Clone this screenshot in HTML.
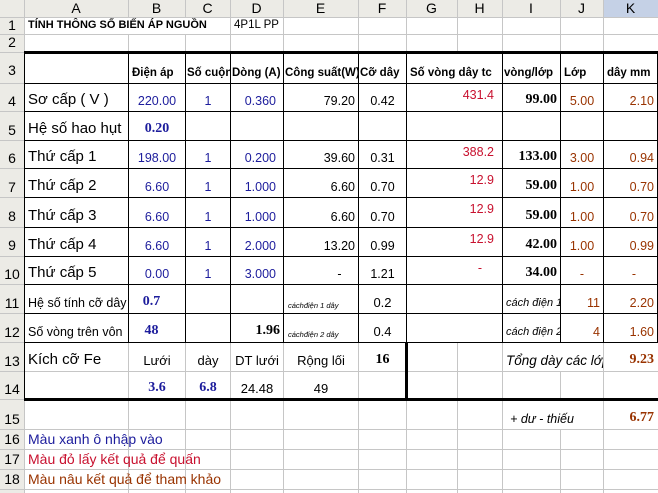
<!DOCTYPE html>
<html><head><meta charset="utf-8"><style>
body{margin:0;width:658px;height:493px;overflow:hidden;background:#fff;position:relative;font-family:"Liberation Sans",Arial,sans-serif}
div{position:absolute;box-sizing:border-box}
.g{background:#c6c6c6}
.k{background:#000}
.h{background:#ecebe6;color:#000;font-size:14px;text-align:center;line-height:17px}
.c{white-space:nowrap;overflow:hidden;line-height:1;display:flex;align-items:flex-end;padding:0 3px 4px 3px;font-size:12.5px;color:#000}
.r{justify-content:flex-end}.m{justify-content:center}
.t{align-items:flex-start;padding-top:6px}
.b{font-family:"Liberation Serif",serif;font-weight:bold;font-size:14px}
.bl{color:#1c1c9c}.rd{color:#c8102e}.br{color:#993300}
.L{font-size:15px}
.hd{font-weight:bold;font-size:11.5px}
.i{font-style:italic}
</style></head><body>
<div class="h" style="left:0;top:0;width:658px;height:17px;"></div>
<div class="h" style="left:0;top:0;width:24px;height:493px;"></div>
<div style="left:603px;top:0;width:55px;height:17px;background:#c5d1e6"></div>
<div class="g" style="left:24px;top:0;width:1px;height:493px"></div>
<div class="g" style="left:128px;top:0;width:1px;height:493px"></div>
<div class="g" style="left:185px;top:0;width:1px;height:493px"></div>
<div class="g" style="left:230px;top:0;width:1px;height:493px"></div>
<div class="g" style="left:283px;top:0;width:1px;height:493px"></div>
<div class="g" style="left:358px;top:0;width:1px;height:493px"></div>
<div class="g" style="left:406px;top:0;width:1px;height:493px"></div>
<div class="g" style="left:457px;top:0;width:1px;height:493px"></div>
<div class="g" style="left:502px;top:0;width:1px;height:493px"></div>
<div class="g" style="left:560px;top:0;width:1px;height:493px"></div>
<div class="g" style="left:603px;top:0;width:1px;height:493px"></div>
<div class="g" style="left:0;top:17px;width:658px;height:1px"></div>
<div class="g" style="left:0;top:34px;width:658px;height:1px"></div>
<div class="g" style="left:0;top:52px;width:658px;height:1px"></div>
<div class="g" style="left:0;top:83px;width:658px;height:1px"></div>
<div class="g" style="left:0;top:111px;width:658px;height:1px"></div>
<div class="g" style="left:0;top:140px;width:658px;height:1px"></div>
<div class="g" style="left:0;top:168px;width:658px;height:1px"></div>
<div class="g" style="left:0;top:197px;width:658px;height:1px"></div>
<div class="g" style="left:0;top:227px;width:658px;height:1px"></div>
<div class="g" style="left:0;top:256px;width:658px;height:1px"></div>
<div class="g" style="left:0;top:284px;width:658px;height:1px"></div>
<div class="g" style="left:0;top:313px;width:658px;height:1px"></div>
<div class="g" style="left:0;top:342px;width:658px;height:1px"></div>
<div class="g" style="left:0;top:371px;width:658px;height:1px"></div>
<div class="g" style="left:0;top:399px;width:658px;height:1px"></div>
<div class="g" style="left:0;top:429px;width:658px;height:1px"></div>
<div class="g" style="left:0;top:449px;width:658px;height:1px"></div>
<div class="g" style="left:0;top:469px;width:658px;height:1px"></div>
<div class="g" style="left:0;top:489px;width:658px;height:1px"></div>
<div style="left:25px;top:18px;width:205px;height:16px;background:#fff"></div>
<div style="left:503px;top:343px;width:100px;height:28px;background:#fff"></div>
<div style="left:503px;top:400px;width:100px;height:29px;background:#fff"></div>
<div class="h" style="left:24px;top:0;width:104px;height:17px;background:none">A</div>
<div class="h" style="left:128px;top:0;width:57px;height:17px;background:none">B</div>
<div class="h" style="left:185px;top:0;width:45px;height:17px;background:none">C</div>
<div class="h" style="left:230px;top:0;width:53px;height:17px;background:none">D</div>
<div class="h" style="left:283px;top:0;width:75px;height:17px;background:none">E</div>
<div class="h" style="left:358px;top:0;width:48px;height:17px;background:none">F</div>
<div class="h" style="left:406px;top:0;width:51px;height:17px;background:none">G</div>
<div class="h" style="left:457px;top:0;width:45px;height:17px;background:none">H</div>
<div class="h" style="left:502px;top:0;width:58px;height:17px;background:none">I</div>
<div class="h" style="left:560px;top:0;width:43px;height:17px;background:none">J</div>
<div class="h" style="left:603px;top:0;width:55px;height:17px;background:none">K</div>
<div class="h" style="left:0;top:17px;width:24px;height:17px;background:none">1</div>
<div class="h" style="left:0;top:34px;width:24px;height:18px;background:none">2</div>
<div class="h" style="left:0;top:62px;width:24px;height:17px;background:none">3</div>
<div class="h" style="left:0;top:93px;width:24px;height:17px;background:none">4</div>
<div class="h" style="left:0;top:122px;width:24px;height:17px;background:none">5</div>
<div class="h" style="left:0;top:150px;width:24px;height:17px;background:none">6</div>
<div class="h" style="left:0;top:179px;width:24px;height:17px;background:none">7</div>
<div class="h" style="left:0;top:208px;width:24px;height:17px;background:none">8</div>
<div class="h" style="left:0;top:237px;width:24px;height:17px;background:none">9</div>
<div class="h" style="left:0;top:266px;width:24px;height:17px;background:none">10</div>
<div class="h" style="left:0;top:295px;width:24px;height:17px;background:none">11</div>
<div class="h" style="left:0;top:324px;width:24px;height:17px;background:none">12</div>
<div class="h" style="left:0;top:353px;width:24px;height:17px;background:none">13</div>
<div class="h" style="left:0;top:381px;width:24px;height:17px;background:none">14</div>
<div class="h" style="left:0;top:411px;width:24px;height:17px;background:none">15</div>
<div class="h" style="left:0;top:431px;width:24px;height:17px;background:none">16</div>
<div class="h" style="left:0;top:451px;width:24px;height:17px;background:none">17</div>
<div class="h" style="left:0;top:471px;width:24px;height:17px;background:none">18</div>
<div class="k" style="left:24px;top:51px;width:634px;height:3px"></div>
<div class="k" style="left:24px;top:83px;width:634px;height:1px"></div>
<div class="k" style="left:24px;top:111px;width:634px;height:1px"></div>
<div class="k" style="left:24px;top:140px;width:634px;height:1px"></div>
<div class="k" style="left:24px;top:168px;width:634px;height:1px"></div>
<div class="k" style="left:24px;top:197px;width:634px;height:1px"></div>
<div class="k" style="left:24px;top:227px;width:634px;height:1px"></div>
<div class="k" style="left:24px;top:256px;width:634px;height:1px"></div>
<div class="k" style="left:24px;top:284px;width:634px;height:1px"></div>
<div class="k" style="left:24px;top:313px;width:634px;height:1px"></div>
<div class="k" style="left:24px;top:342px;width:634px;height:1px"></div>
<div class="k" style="left:24px;top:398px;width:634px;height:3px"></div>
<div class="k" style="left:24px;top:52px;width:1px;height:348px"></div>
<div class="k" style="left:128px;top:52px;width:1px;height:290px"></div>
<div class="k" style="left:185px;top:52px;width:1px;height:290px"></div>
<div class="k" style="left:230px;top:52px;width:1px;height:290px"></div>
<div class="k" style="left:283px;top:52px;width:1px;height:290px"></div>
<div class="k" style="left:358px;top:52px;width:1px;height:290px"></div>
<div class="k" style="left:406px;top:52px;width:1px;height:290px"></div>
<div class="k" style="left:405px;top:342px;width:3px;height:58px"></div>
<div class="k" style="left:502px;top:52px;width:1px;height:290px"></div>
<div class="k" style="left:560px;top:52px;width:1px;height:290px"></div>
<div class="k" style="left:603px;top:52px;width:1px;height:290px"></div>
<div class="k" style="left:657px;top:52px;width:1px;height:290px"></div>
<div style="left:407px;top:54px;width:95px;height:29px;background:#fff"></div>
<div style="left:407px;top:84px;width:95px;height:27px;background:#fff"></div>
<div style="left:407px;top:112px;width:95px;height:28px;background:#fff"></div>
<div style="left:407px;top:141px;width:95px;height:27px;background:#fff"></div>
<div style="left:407px;top:169px;width:95px;height:28px;background:#fff"></div>
<div style="left:407px;top:198px;width:95px;height:29px;background:#fff"></div>
<div style="left:407px;top:228px;width:95px;height:28px;background:#fff"></div>
<div style="left:407px;top:257px;width:95px;height:27px;background:#fff"></div>
<div style="left:407px;top:285px;width:95px;height:28px;background:#fff"></div>
<div style="left:407px;top:314px;width:95px;height:28px;background:#fff"></div>
<div class="c hd" style="left:25px;top:17px;width:220px;height:17px;padding-bottom:3px;font-size:11px">TÍNH THÔNG SỐ BIẾN ÁP NGUỒN</div>
<div class="c" style="left:231px;top:17px;width:60px;height:17px;padding-bottom:3px;font-size:11.5px">4P1L PP</div>
<div class="c hd" style="left:129px;top:52px;width:56px;height:31px">Điện áp</div>
<div class="c hd" style="left:186px;top:52px;width:44px;height:31px;padding:0 0 4px 1px">Số cuộn</div>
<div class="c hd" style="left:231px;top:52px;width:52px;height:31px;padding-left:1px">Dòng (A)</div>
<div class="c hd" style="left:284px;top:52px;width:74px;height:31px;padding-left:1px">Công suất(W)</div>
<div class="c hd" style="left:359px;top:52px;width:47px;height:31px;padding-left:1px">Cỡ dây</div>
<div class="c hd" style="left:407px;top:52px;width:95px;height:31px">Số vòng dây tc</div>
<div class="c hd" style="left:503px;top:52px;width:57px;height:31px;padding-left:1px">vòng/lớp</div>
<div class="c hd" style="left:561px;top:52px;width:42px;height:31px">Lớp</div>
<div class="c hd" style="left:604px;top:52px;width:53px;height:31px">dây mm</div>
<div class="c L" style="left:25px;top:83px;width:103px;height:28px">Sơ cấp ( V )</div>
<div class="c m bl" style="left:129px;top:83px;width:56px;height:28px">220.00</div>
<div class="c m bl" style="left:186px;top:83px;width:44px;height:28px">1</div>
<div class="c r bl" style="left:231px;top:83px;width:52px;height:28px;padding-right:7px">0.360</div>
<div class="c r" style="left:284px;top:83px;width:74px;height:28px">79.20</div>
<div class="c m" style="left:359px;top:83px;width:47px;height:28px">0.42</div>
<div class="c r t rd" style="left:407px;top:83px;width:95px;height:28px;padding-right:8px">431.4</div>
<div class="c r b" style="left:503px;top:83px;width:57px;height:28px">99.00</div>
<div class="c m br" style="left:561px;top:83px;width:42px;height:28px">5.00</div>
<div class="c r br" style="left:604px;top:83px;width:53px;height:28px">2.10</div>
<div class="c L" style="left:25px;top:111px;width:103px;height:29px">Hệ số hao hụt</div>
<div class="c m b bl" style="left:129px;top:111px;width:56px;height:29px">0.20</div>
<div class="c L" style="left:25px;top:140px;width:103px;height:28px">Thứ cấp 1</div>
<div class="c m bl" style="left:129px;top:140px;width:56px;height:28px">198.00</div>
<div class="c m bl" style="left:186px;top:140px;width:44px;height:28px">1</div>
<div class="c r bl" style="left:231px;top:140px;width:52px;height:28px;padding-right:7px">0.200</div>
<div class="c r" style="left:284px;top:140px;width:74px;height:28px">39.60</div>
<div class="c m" style="left:359px;top:140px;width:47px;height:28px">0.31</div>
<div class="c r t rd" style="left:407px;top:140px;width:95px;height:28px;padding-right:8px">388.2</div>
<div class="c r b" style="left:503px;top:140px;width:57px;height:28px">133.00</div>
<div class="c m br" style="left:561px;top:140px;width:42px;height:28px">3.00</div>
<div class="c r br" style="left:604px;top:140px;width:53px;height:28px">0.94</div>
<div class="c L" style="left:25px;top:168px;width:103px;height:29px">Thứ cấp 2</div>
<div class="c m bl" style="left:129px;top:168px;width:56px;height:29px">6.60</div>
<div class="c m bl" style="left:186px;top:168px;width:44px;height:29px">1</div>
<div class="c r bl" style="left:231px;top:168px;width:52px;height:29px;padding-right:7px">1.000</div>
<div class="c r" style="left:284px;top:168px;width:74px;height:29px">6.60</div>
<div class="c m" style="left:359px;top:168px;width:47px;height:29px">0.70</div>
<div class="c r t rd" style="left:407px;top:168px;width:95px;height:29px;padding-right:8px">12.9</div>
<div class="c r b" style="left:503px;top:168px;width:57px;height:29px">59.00</div>
<div class="c m br" style="left:561px;top:168px;width:42px;height:29px">1.00</div>
<div class="c r br" style="left:604px;top:168px;width:53px;height:29px">0.70</div>
<div class="c L" style="left:25px;top:197px;width:103px;height:30px">Thứ cấp 3</div>
<div class="c m bl" style="left:129px;top:197px;width:56px;height:30px">6.60</div>
<div class="c m bl" style="left:186px;top:197px;width:44px;height:30px">1</div>
<div class="c r bl" style="left:231px;top:197px;width:52px;height:30px;padding-right:7px">1.000</div>
<div class="c r" style="left:284px;top:197px;width:74px;height:30px">6.60</div>
<div class="c m" style="left:359px;top:197px;width:47px;height:30px">0.70</div>
<div class="c r t rd" style="left:407px;top:197px;width:95px;height:30px;padding-right:8px">12.9</div>
<div class="c r b" style="left:503px;top:197px;width:57px;height:30px">59.00</div>
<div class="c m br" style="left:561px;top:197px;width:42px;height:30px">1.00</div>
<div class="c r br" style="left:604px;top:197px;width:53px;height:30px">0.70</div>
<div class="c L" style="left:25px;top:227px;width:103px;height:29px">Thứ cấp 4</div>
<div class="c m bl" style="left:129px;top:227px;width:56px;height:29px">6.60</div>
<div class="c m bl" style="left:186px;top:227px;width:44px;height:29px">1</div>
<div class="c r bl" style="left:231px;top:227px;width:52px;height:29px;padding-right:7px">2.000</div>
<div class="c r" style="left:284px;top:227px;width:74px;height:29px">13.20</div>
<div class="c m" style="left:359px;top:227px;width:47px;height:29px">0.99</div>
<div class="c r t rd" style="left:407px;top:227px;width:95px;height:29px;padding-right:8px">12.9</div>
<div class="c r b" style="left:503px;top:227px;width:57px;height:29px">42.00</div>
<div class="c m br" style="left:561px;top:227px;width:42px;height:29px">1.00</div>
<div class="c r br" style="left:604px;top:227px;width:53px;height:29px">0.99</div>
<div class="c L" style="left:25px;top:256px;width:103px;height:28px">Thứ cấp 5</div>
<div class="c m bl" style="left:129px;top:256px;width:56px;height:28px">0.00</div>
<div class="c m bl" style="left:186px;top:256px;width:44px;height:28px">1</div>
<div class="c r bl" style="left:231px;top:256px;width:52px;height:28px;padding-right:7px">3.000</div>
<div class="c m" style="left:284px;top:256px;width:74px;height:28px;padding-left:40px">-</div>
<div class="c m" style="left:359px;top:256px;width:47px;height:28px">1.21</div>
<div class="c r t rd" style="left:407px;top:256px;width:95px;height:28px;padding-right:20px">-</div>
<div class="c r b" style="left:503px;top:256px;width:57px;height:28px">34.00</div>
<div class="c m br" style="left:561px;top:256px;width:42px;height:28px">-</div>
<div class="c m br" style="left:604px;top:256px;width:53px;height:28px;padding-left:10px">-</div>
<div class="c" style="left:25px;top:284px;width:103px;height:29px;font-size:12.5px">Hệ số tính cỡ dây</div>
<div class="c m b bl" style="left:129px;top:284px;width:56px;height:29px;padding-right:14px">0.7</div>
<div class="c i" style="left:284px;top:284px;width:74px;height:29px;font-size:7.5px;padding-left:4px">cáchđiện 1 dây</div>
<div class="c m" style="left:359px;top:284px;width:47px;height:29px;font-size:13px">0.2</div>
<div class="c i" style="left:503px;top:284px;width:57px;height:29px;font-size:11px;padding-left:3px">cách điện 1</div>
<div class="c r br" style="left:561px;top:284px;width:42px;height:29px">11</div>
<div class="c r br" style="left:604px;top:284px;width:53px;height:29px">2.20</div>
<div class="c" style="left:25px;top:313px;width:103px;height:29px;font-size:12.5px">Số vòng trên vôn</div>
<div class="c m b bl" style="left:129px;top:313px;width:56px;height:29px;padding-right:14px">48</div>
<div class="c r b" style="left:231px;top:313px;width:52px;height:29px">1.96</div>
<div class="c i" style="left:284px;top:313px;width:74px;height:29px;font-size:7.5px;padding-left:4px">cáchđiện 2 dây</div>
<div class="c m" style="left:359px;top:313px;width:47px;height:29px;font-size:13px">0.4</div>
<div class="c i" style="left:503px;top:313px;width:57px;height:29px;font-size:11px;padding-left:3px">cách điện 2</div>
<div class="c r br" style="left:561px;top:313px;width:42px;height:29px">4</div>
<div class="c r br" style="left:604px;top:313px;width:53px;height:29px">1.60</div>
<div class="c L" style="left:25px;top:342px;width:103px;height:29px;padding-bottom:4px">Kích cỡ Fe</div>
<div class="c m" style="left:129px;top:342px;width:56px;height:29px;font-size:13px">Lưới</div>
<div class="c m" style="left:186px;top:342px;width:44px;height:29px;font-size:13px">dày</div>
<div class="c m" style="left:231px;top:342px;width:52px;height:29px;font-size:13px">DT lưới</div>
<div class="c m" style="left:284px;top:342px;width:74px;height:29px;font-size:13px">Rộng lối</div>
<div class="c m b" style="left:359px;top:342px;width:47px;height:29px">16</div>
<div class="c i" style="left:503px;top:342px;width:100px;height:29px;font-size:13.5px;padding-left:3px">Tổng dày các lớp</div>
<div class="c r b br" style="left:604px;top:342px;width:53px;height:29px">9.23</div>
<div class="c m b bl" style="left:129px;top:371px;width:56px;height:28px">3.6</div>
<div class="c m b bl" style="left:186px;top:371px;width:44px;height:28px">6.8</div>
<div class="c m" style="left:231px;top:371px;width:52px;height:28px;font-size:13px">24.48</div>
<div class="c m" style="left:284px;top:371px;width:74px;height:28px;font-size:13px">49</div>
<div class="c m i" style="left:503px;top:399px;width:100px;height:30px;font-size:12.5px;padding-right:25px">+ dư - thiếu</div>
<div class="c r b br" style="left:604px;top:399px;width:53px;height:30px">6.77</div>
<div class="c" style="left:25px;top:429px;width:300px;height:20px;font-size:14px;color:#1c1c9c;padding-bottom:3px">Màu xanh ô nhập vào</div>
<div class="c" style="left:25px;top:449px;width:300px;height:20px;font-size:14px;color:#c8102e;padding-bottom:3px">Màu đỏ lấy kết quả để quấn</div>
<div class="c" style="left:25px;top:469px;width:300px;height:20px;font-size:14px;color:#993300;padding-bottom:3px">Màu nâu kết quả để tham khảo</div>
</body></html>
